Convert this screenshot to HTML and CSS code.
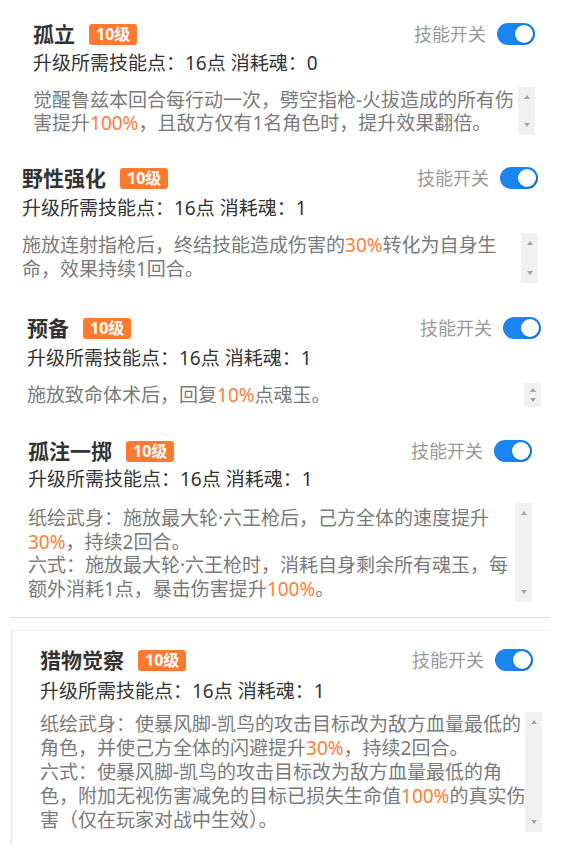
FILE: index.html
```html
<!DOCTYPE html>
<html lang="zh-CN">
<head>
    <meta charset="UTF-8">
    <meta name="viewport" content="width=device-width, initial-scale=1.0">
    <title>技能列表</title>
    <link rel="stylesheet" href="styles.css">
</head>
<body>
    <!-- 技能 1 -->
    <div class="skill skill-1">
        <div class="skill-head">
            <span class="skill-name">孤立</span>
            <span class="level">10级</span>
            <div class="switch-box">技能开关<span class="switch"><span class="knob"></span></span></div>
        </div>
        <div class="skill-cost">升级所需技能点：16点 消耗魂：0</div>
        <div class="skill-desc">
            <div class="desc-text">觉醒鲁兹本回合每行动一次，劈空指枪-火拔造成的所有伤<br>害提升<em>100%</em>，且敌方仅有1名角色时，提升效果翻倍。</div>
            <div class="scroll"><i class="arrow-up"></i><i class="arrow-down"></i></div>
        </div>
    </div>

    <!-- 技能 2 -->
    <div class="skill skill-2">
        <div class="skill-head">
            <span class="skill-name">野性强化</span>
            <span class="level">10级</span>
            <div class="switch-box">技能开关<span class="switch"><span class="knob"></span></span></div>
        </div>
        <div class="skill-cost">升级所需技能点：16点 消耗魂：1</div>
        <div class="skill-desc">
            <div class="desc-text">施放连射指枪后，终结技能造成伤害的<em>30%</em>转化为自身生<br>命，效果持续1回合。</div>
            <div class="scroll"><i class="arrow-up"></i><i class="arrow-down"></i></div>
        </div>
    </div>

    <!-- 技能 3 -->
    <div class="skill skill-3">
        <div class="skill-head">
            <span class="skill-name">预备</span>
            <span class="level">10级</span>
            <div class="switch-box">技能开关<span class="switch"><span class="knob"></span></span></div>
        </div>
        <div class="skill-cost">升级所需技能点：16点 消耗魂：1</div>
        <div class="skill-desc">
            <div class="desc-text">施放致命体术后，回复<em>10%</em>点魂玉。</div>
            <div class="scroll"><i class="arrow-up"></i><i class="arrow-down"></i></div>
        </div>
    </div>

    <!-- 技能 4 -->
    <div class="skill skill-4">
        <div class="skill-head">
            <span class="skill-name">孤注一掷</span>
            <span class="level">10级</span>
            <div class="switch-box">技能开关<span class="switch"><span class="knob"></span></span></div>
        </div>
        <div class="skill-cost">升级所需技能点：16点 消耗魂：1</div>
        <div class="skill-desc">
            <div class="desc-text">纸绘武身：施放最大轮·六王枪后，己方全体的速度提升<br><em>30%</em>，持续2回合。<br>六式：施放最大轮·六王枪时，消耗自身剩余所有魂玉，每<br>额外消耗1点，暴击伤害提升<em>100%</em>。</div>
            <div class="scroll"><i class="arrow-up"></i><i class="arrow-down"></i></div>
        </div>
    </div>

    <hr class="divider">

    <!-- 技能 5 -->
    <div class="skill skill-5">
        <div class="skill-head">
            <span class="skill-name">猎物觉察</span>
            <span class="level">10级</span>
            <div class="switch-box">技能开关<span class="switch"><span class="knob"></span></span></div>
        </div>
        <div class="skill-cost">升级所需技能点：16点 消耗魂：1</div>
        <div class="skill-desc">
            <div class="desc-text">纸绘武身：使暴风脚-凯鸟的攻击目标改为敌方血量最低的<br>角色，并使己方全体的闪避提升<em>30%</em>，持续2回合。<br>六式：使暴风脚-凯鸟的攻击目标改为敌方血量最低的角<br>色，附加无视伤害减免的目标已损失生命值<em>100%</em>的真实伤<br>害（仅在玩家对战中生效）。</div>
            <div class="scroll"><i class="arrow-up"></i><i class="arrow-down"></i></div>
        </div>
    </div>
</body>
</html>
```

FILE: styles.css
```css
body {
    margin: 0;
    width: 561px;
    background: #fff;
    font-family: "Noto Sans", "Noto Sans CJK SC", sans-serif;
    color: #333;
}
.skill-head {
    display: flex;
    align-items: center;
    height: 24px;
}
.skill-name {
    font-size: 21px;
    font-weight: 700;
    color: #333;
    line-height: 24px;
}
.level {
    margin-left: 14px;
    height: 21px;
    line-height: 21px;
    padding: 0 7px;
    background: #ff7a30;
    color: #fff;
    font-size: 16px;
    font-weight: 700;
    border-radius: 3px;
}
.switch-box {
    margin-left: auto;
    display: flex;
    align-items: center;
    gap: 11px;
    font-size: 18px;
    line-height: 24px;
    color: #999;
}
.switch {
    width: 38px;
    height: 22px;
    box-sizing: border-box;
    padding: 2px;
    border-radius: 11px;
    background: #1a84f0;
    display: flex;
    justify-content: flex-end;
    align-items: center;
}
.knob {
    width: 18px;
    height: 18px;
    border-radius: 50%;
    background: #fff;
    box-shadow: 1px 1px 3px rgba(0, 0, 0, 0.3);
}
.skill-cost {
    font-size: 19px;
    line-height: 24px;
    color: #333;
    margin-top: 5px;
}
.skill-desc {
    display: flex;
    margin-top: 12px;
}
.desc-text {
    flex: 1;
    font-size: 19px;
    line-height: 23px;
    color: #7a7a7a;
    white-space: nowrap;
}
.desc-text em {
    font-style: normal;
    color: #ff7d3a;
}
.scroll {
    flex: none;
    width: 17px;
    background: #f1f1f1;
    display: flex;
    flex-direction: column;
    justify-content: space-between;
    align-items: center;
    padding: 8px 0;
    box-sizing: border-box;
}
.skill-3 .scroll {
    padding: 5px 0;
}
.arrow-up {
    width: 0;
    height: 0;
    border-left: 3.5px solid transparent;
    border-right: 3.5px solid transparent;
    border-bottom: 4px solid #a3a3a3;
}
.arrow-down {
    width: 0;
    height: 0;
    border-left: 3.5px solid transparent;
    border-right: 3.5px solid transparent;
    border-top: 4px solid #a3a3a3;
}

/* 每个技能块的位置 */
.skill-1 {
    padding: 22px 26px 0 33px;
}
.skill-1 .desc-text {
    padding: 2px 0 0;
}
.skill-2 {
    padding: 31px 23px 0 22px;
}
.skill-2 .skill-cost,
.skill-3 .skill-cost {
    margin-top: 6px;
}
.skill-2 .skill-desc,
.skill-3 .skill-desc {
    margin-top: 13px;
}
.skill-2 .desc-text {
    line-height: 24px;
    padding-bottom: 2px;
}
.skill-3 {
    padding: 33px 20px 0 27px;
}
.skill-3 .desc-text {
    line-height: 24px;
}
.skill-4 {
    padding: 32px 29px 0 28px;
}
.skill-4 .skill-cost {
    margin-top: 4px;
}
.skill-4 .desc-text {
    line-height: 23.5px;
    padding: 4px 0 1px;
}
.divider {
    margin: 15px 11px 0 10px;
    border: none;
    border-top: 1px solid #dcdcdc;
}
.skill-5 {
    margin: 12px 11px 0 10px;
    padding: 17px 17px 13px 27px;
    border-top: 1px solid #f2f2f2;
    border-left: 3px solid #f3f3f3;
}
.skill-5 .skill-cost {
    margin-top: 7px;
}
.skill-5 .skill-desc {
    margin-top: 9px;
}
.skill-5 .desc-text {
    line-height: 24px;
}
```
